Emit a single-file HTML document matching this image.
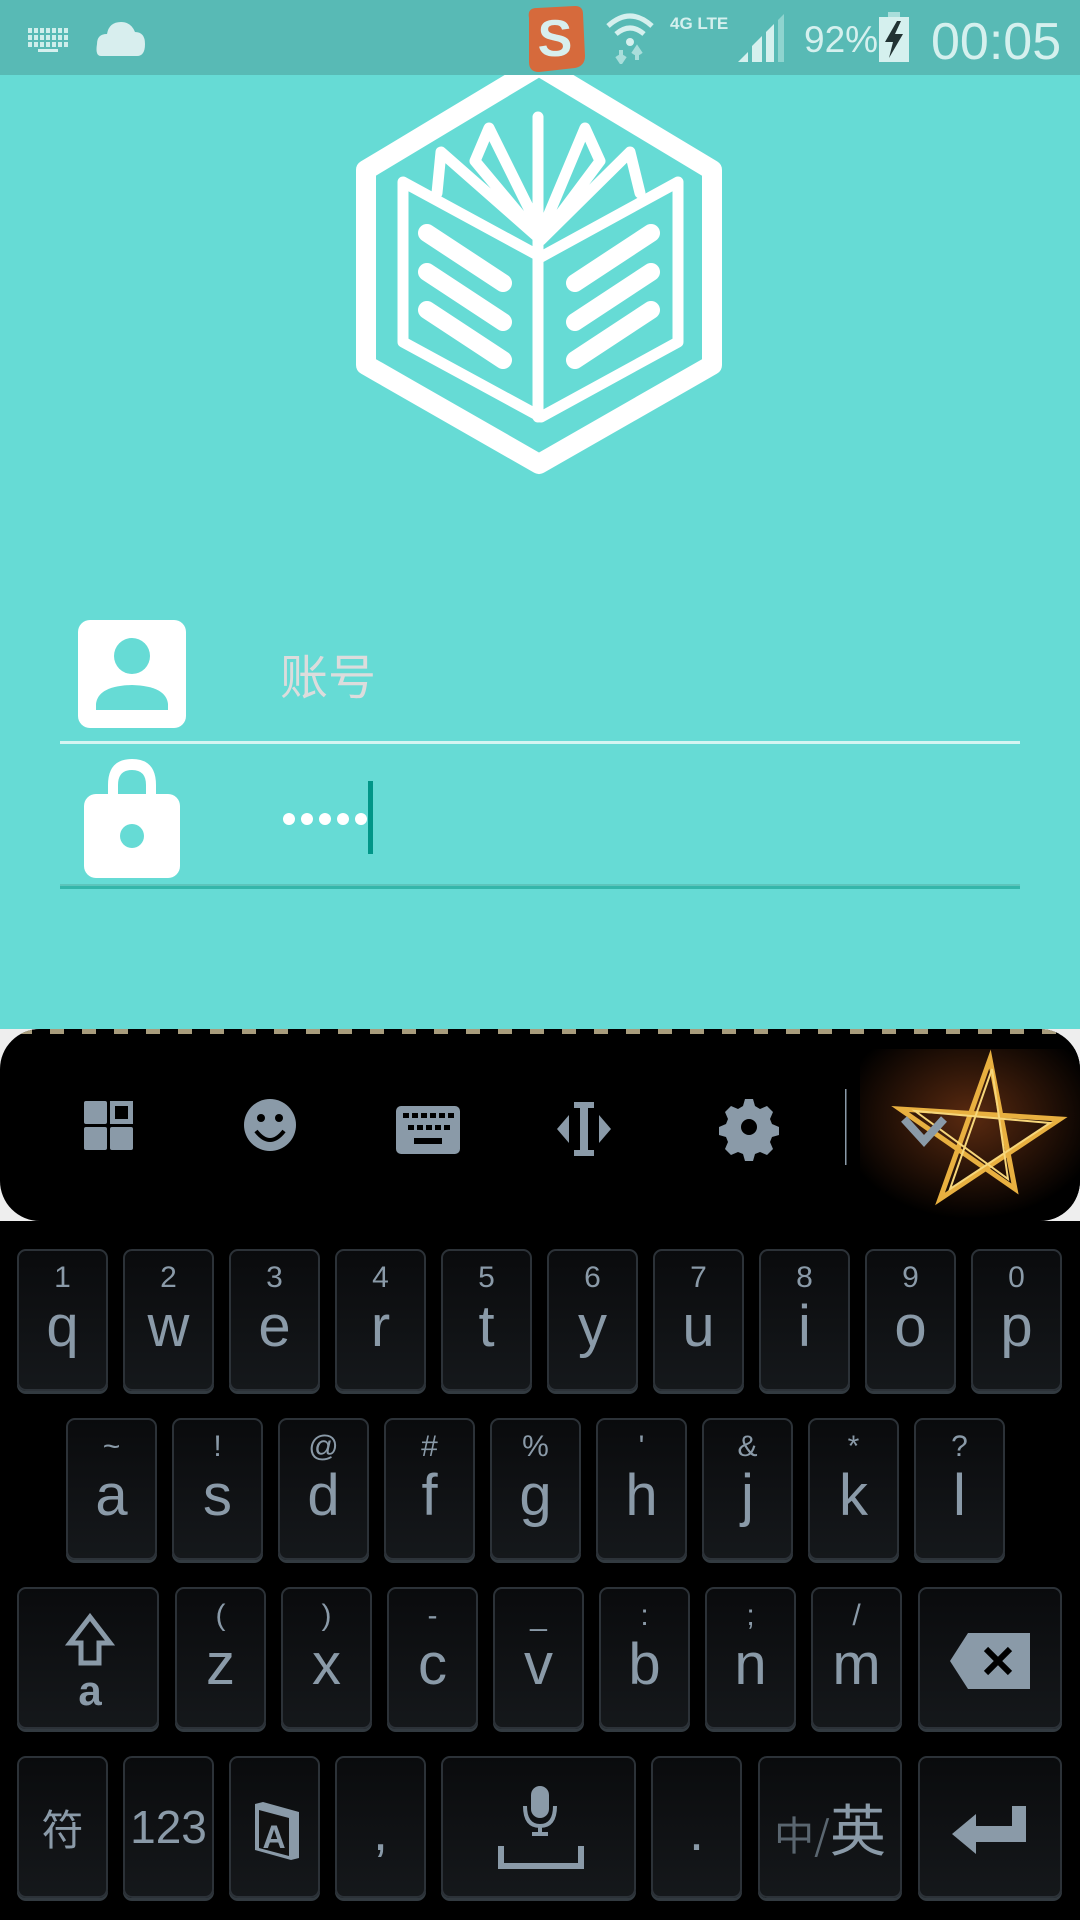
<!DOCTYPE html>
<html><head><meta charset="utf-8"><style>
*{margin:0;padding:0;box-sizing:border-box}
body{width:1080px;height:1920px;overflow:hidden;background:#66dbd5;font-family:"Liberation Sans","Noto Sans CJK SC",sans-serif;position:relative}
.abs{position:absolute}
#sb{left:0;top:0;width:1080px;height:75px;background:#58bab5;z-index:5}
.st{color:#d5f0ee;position:absolute;white-space:nowrap}
#kb{left:0;top:1221px;width:1080px;height:699px;background:#000}
.k{position:absolute;border:2px solid #2c3238;border-radius:9px;background:linear-gradient(#0a0b0d,#15181b);box-shadow:0 3px 0 #323a40;color:#8a9aa8;text-align:center}
.k .n{position:absolute;left:0;right:0;top:12px;font-size:30px;line-height:30px}
.k .l{position:absolute;left:0;right:0;top:46px;font-size:58px;line-height:60px}
.k .c{position:absolute;left:0;right:0;top:0;bottom:0;display:flex;align-items:center;justify-content:center}
</style></head><body>
<svg class="abs" style="left:0;top:0" width="1080" height="500" viewBox="0 0 1080 500">
 <g fill="none" stroke="#fff" stroke-linejoin="round" stroke-linecap="round">
  <path d="M539 66 L712 170 V365 L539 464 L366 365 V170Z" stroke-width="20"/>
  <g stroke-width="11">
   <path d="M403 182 V342 L541 417 L678 342 V182 L541 257 Z"/>
   <path d="M538 117 V417"/>
   <path d="M437 193 L441 152 L541 240 L475 161 L489 128 L541 233 L585 128 L600 161 L541 240 L630 152 L640 193"/>
  </g>
  <g stroke-width="18">
   <path d="M427 233 L503 283 M427 272 L503 322 M427 310 L503 360"/>
   <path d="M651 233 L575 283 M651 272 L575 322 M651 310 L575 360"/>
  </g>
 </g>
</svg>
<div id="sb" class="abs">
 <svg class="abs" style="left:28px;top:28px" width="42" height="24" viewBox="0 0 42 24"><g fill="#d5f0ee"><path d="M0 0h40v5H0z M0 7h40v5H0z M0 14h40v5H0z" opacity=".95"/><rect x="10" y="21" width="20" height="3"/></g><g fill="#58bab5"><rect x="4" y="0" width="2" height="19"/><rect x="10" y="0" width="2" height="19"/><rect x="16" y="0" width="2" height="19"/><rect x="22" y="0" width="2" height="19"/><rect x="28" y="0" width="2" height="19"/><rect x="34" y="0" width="2" height="19"/></g></svg>
 <svg class="abs" style="left:95px;top:18px" width="52" height="40" viewBox="0 0 52 40"><path d="M6 38 Q0 38 2 26 Q2 16 12 16 Q14 4 26 4 Q36 4 40 14 Q50 14 50 26 Q50 38 42 38Z" fill="#d8eeee"/></svg>
 <svg class="abs" style="left:523px;top:6px" width="64" height="66" viewBox="0 0 64 66"><path d="M6 12 Q4 2 14 2 L52 0 Q60 0 60 8 L62 50 Q62 60 52 62 L16 66 Q6 66 6 56Z" fill="#d66a3c"/><text x="32" y="50" text-anchor="middle" font-size="52" font-weight="bold" fill="#d8efee" font-family="Liberation Sans">S</text></svg>
 <svg class="abs" style="left:604px;top:10px" width="52" height="54" viewBox="0 0 52 54"><g fill="none" stroke="#d5f0ee" stroke-width="5"><path d="M4 16 Q26 -4 48 16"/><path d="M12 24 Q26 12 40 24"/></g><circle cx="26" cy="32" r="4" fill="#d5f0ee"/><path d="M17 40v10M13 46l4 6 4-6M33 50V40M29 44l4-6 4 6" stroke="#a9dedb" stroke-width="4" fill="none"/></svg>
 <div class="st" style="left:670px;top:14px;font-size:17px;font-weight:bold">4G LTE</div>
 <svg class="abs" style="left:738px;top:14px" width="50" height="48" viewBox="0 0 50 48"><path d="M0 48 L10 38 V48Z M14 48V32 L24 22V48Z M28 48V18L36 10V48Z" fill="#d5f0ee"/><path d="M40 48V6 L46 0V48Z" fill="#8fd4cf"/></svg>
 <div class="st" style="left:804px;top:19px;font-size:37px">92%</div>
 <svg class="abs" style="left:879px;top:12px" width="30" height="50" viewBox="0 0 30 50"><rect x="9" y="0" width="12" height="6" fill="#a9dedb"/><rect x="0" y="5" width="30" height="45" fill="#d5f0ee"/><path d="M18 9 L6 30 H14 L10 46 L24 22 H16 L22 9Z" fill="#233"/></svg>
 <div class="st" style="left:931px;top:12px;font-size:52px">00:05</div>
</div>
<svg class="abs" style="left:78px;top:620px" width="108" height="108" viewBox="0 0 108 108"><rect width="108" height="108" rx="12" fill="#fff"/><circle cx="54" cy="36" r="18" fill="#66dbd5"/><path d="M18 90 V84 Q20 66 54 65 Q88 66 90 84 V90Z" fill="#66dbd5"/></svg>
<div class="abs" style="left:280px;top:646px;font-size:48px;line-height:54px;color:#dcdcdc;font-family:'Noto Sans CJK SC',sans-serif">账号</div>
<div class="abs" style="left:60px;top:741px;width:960px;height:3px;background:#d4f5f2"></div>
<svg class="abs" style="left:84px;top:759px" width="96" height="120" viewBox="0 0 96 120"><path d="M24 40 V26 Q24 0 48 0 Q72 0 72 26 V40 H62 V26 Q62 11 48 11 Q34 11 34 26 V40Z" fill="#fff"/><rect x="0" y="35" width="96" height="84" rx="12" fill="#fff"/><circle cx="48" cy="77" r="12" fill="#66dbd5"/></svg>
<svg class="abs" style="left:280px;top:810px" width="90" height="20"><g fill="#fff"><circle cx="9" cy="9" r="6"/><circle cx="27" cy="9" r="6"/><circle cx="45" cy="9" r="6"/><circle cx="63" cy="9" r="6"/><circle cx="81" cy="9" r="6"/></g></svg>
<div class="abs" style="left:368px;top:781px;width:5px;height:73px;background:#009688"></div>
<div class="abs" style="left:60px;top:884px;width:960px;height:2px;background:#5cc4bb"></div>
<div class="abs" style="left:60px;top:886px;width:960px;height:3px;background:#34b6aa"></div>

<div class="abs" style="left:0;top:1029px;width:1080px;height:192px;background:#eee"></div>
<div class="abs" style="left:0;top:1029px;width:1080px;height:192px;background:#000;border-radius:40px;overflow:hidden">
 <div class="abs" style="left:0;top:0;width:1080px;height:5px;background:repeating-linear-gradient(90deg,#000 0 18px,#a89c7c 18px 32px)"></div>
 <svg class="abs" style="left:860px;top:20px" width="220" height="170" viewBox="0 0 220 170"><defs><radialGradient id="g" cx="0.5" cy="0.4" r="0.6"><stop offset="0" stop-color="#5a2a10"/><stop offset="1" stop-color="#000"/></radialGradient></defs><rect width="220" height="170" fill="url(#g)"/><path d="M130 10 L155 140 L40 60 L200 70 L80 150Z" fill="none" stroke="#e8b040" stroke-width="5"/><path d="M132 20 L148 130 L55 62 L190 74 L90 140Z" fill="none" stroke="#f6d67a" stroke-width="2"/></svg>
</div>
<svg class="abs" style="left:0;top:1029px" width="1080" height="192" viewBox="0 0 1080 192"><g fill="#8a9aa8">
 <rect x="84" y="72" width="23" height="23" rx="2"/><rect x="84" y="98" width="23" height="23" rx="2"/><rect x="110" y="98" width="23" height="23" rx="2"/><path d="M110 72h23v23h-23z M115 77v13h13v-13z" fill-rule="evenodd"/>
 <circle cx="270" cy="96" r="26"/>
 <rect x="396" y="77" width="64" height="48" rx="5"/>
 <rect x="580" y="73" width="8" height="54"/><rect x="574" y="73" width="20" height="6"/><rect x="574" y="121" width="20" height="6"/><path d="M557 100 l12-14v28z M611 100 l-12-14v28z"/>
 <path d="M745 70 h8 l2 7 5 3 7-3 6 6-3 7 2 5 7 3v8l-7 2-2 5 3 7-6 6-7-3-5 2-2 7h-8l-2-7-5-2-7 3-6-6 3-7-2-5-7-2v-8l7-3 2-5-3-7 6-6 7 3 5-3z"/>
</g>
<g fill="#000"><circle cx="261" cy="89" r="4"/><circle cx="279" cy="89" r="4"/><path d="M256 102 Q270 120 284 102" stroke="#000" stroke-width="4" fill="none"/>
<g><rect x="403" y="84" width="6" height="5"/><rect x="412" y="84" width="6" height="5"/><rect x="421" y="84" width="6" height="5"/><rect x="430" y="84" width="6" height="5"/><rect x="439" y="84" width="6" height="5"/><rect x="448" y="84" width="6" height="5"/><rect x="408" y="96" width="6" height="5"/><rect x="417" y="96" width="6" height="5"/><rect x="426" y="96" width="6" height="5"/><rect x="435" y="96" width="6" height="5"/><rect x="444" y="96" width="6" height="5"/><rect x="414" y="109" width="28" height="6"/></g>
<circle cx="749" cy="98" r="8"/></g>
<rect x="845" y="60" width="1.5" height="76" fill="#8a9aa8"/>
<path d="M904 90 L924 112 L944 90" fill="none" stroke="#8a9aa8" stroke-width="8"/>
</svg>

<div id="kb" class="abs"></div>
<div class="k" style="left:17px;top:1249px;width:91px;height:142px"><span class="n">1</span><span class="l">q</span></div>
<div class="k" style="left:123px;top:1249px;width:91px;height:142px"><span class="n">2</span><span class="l">w</span></div>
<div class="k" style="left:229px;top:1249px;width:91px;height:142px"><span class="n">3</span><span class="l">e</span></div>
<div class="k" style="left:335px;top:1249px;width:91px;height:142px"><span class="n">4</span><span class="l">r</span></div>
<div class="k" style="left:441px;top:1249px;width:91px;height:142px"><span class="n">5</span><span class="l">t</span></div>
<div class="k" style="left:547px;top:1249px;width:91px;height:142px"><span class="n">6</span><span class="l">y</span></div>
<div class="k" style="left:653px;top:1249px;width:91px;height:142px"><span class="n">7</span><span class="l">u</span></div>
<div class="k" style="left:759px;top:1249px;width:91px;height:142px"><span class="n">8</span><span class="l">i</span></div>
<div class="k" style="left:865px;top:1249px;width:91px;height:142px"><span class="n">9</span><span class="l">o</span></div>
<div class="k" style="left:971px;top:1249px;width:91px;height:142px"><span class="n">0</span><span class="l">p</span></div>
<div class="k" style="left:66px;top:1418px;width:91px;height:142px"><span class="n">~</span><span class="l">a</span></div>
<div class="k" style="left:172px;top:1418px;width:91px;height:142px"><span class="n">!</span><span class="l">s</span></div>
<div class="k" style="left:278px;top:1418px;width:91px;height:142px"><span class="n">@</span><span class="l">d</span></div>
<div class="k" style="left:384px;top:1418px;width:91px;height:142px"><span class="n">#</span><span class="l">f</span></div>
<div class="k" style="left:490px;top:1418px;width:91px;height:142px"><span class="n">%</span><span class="l">g</span></div>
<div class="k" style="left:596px;top:1418px;width:91px;height:142px"><span class="n">'</span><span class="l">h</span></div>
<div class="k" style="left:702px;top:1418px;width:91px;height:142px"><span class="n">&amp;</span><span class="l">j</span></div>
<div class="k" style="left:808px;top:1418px;width:91px;height:142px"><span class="n">*</span><span class="l">k</span></div>
<div class="k" style="left:914px;top:1418px;width:91px;height:142px"><span class="n">?</span><span class="l">l</span></div>
<div class="k" style="left:17px;top:1587px;width:142px;height:142px"><svg class="abs" style="left:46px;top:24px" width="50" height="94" viewBox="0 0 50 94"><path d="M25 4 L45 30 H34 V50 H16 V30 H5Z" fill="none" stroke="#8a9aa8" stroke-width="5"/><text x="25" y="92" text-anchor="middle" font-size="42" font-weight="bold" fill="#8a9aa8" font-family="Liberation Sans">a</text></svg></div>
<div class="k" style="left:175px;top:1587px;width:91px;height:142px"><span class="n">(</span><span class="l">z</span></div>
<div class="k" style="left:281px;top:1587px;width:91px;height:142px"><span class="n">)</span><span class="l">x</span></div>
<div class="k" style="left:387px;top:1587px;width:91px;height:142px"><span class="n">-</span><span class="l">c</span></div>
<div class="k" style="left:493px;top:1587px;width:91px;height:142px"><span class="n">_</span><span class="l">v</span></div>
<div class="k" style="left:599px;top:1587px;width:91px;height:142px"><span class="n">:</span><span class="l">b</span></div>
<div class="k" style="left:705px;top:1587px;width:91px;height:142px"><span class="n">;</span><span class="l">n</span></div>
<div class="k" style="left:811px;top:1587px;width:91px;height:142px"><span class="n">/</span><span class="l">m</span></div>
<div class="k" style="left:918px;top:1587px;width:144px;height:142px"><svg class="abs" style="left:30px;top:44px" width="80" height="56" viewBox="0 0 80 56"><path d="M0 28 L18 0 H80 V56 H18Z" fill="#8a9aa8"/><path d="M36 16 L60 40 M60 16 L36 40" stroke="#000" stroke-width="6"/></svg></div>
<div class="k" style="left:17px;top:1756px;width:91px;height:142px"><span class="c" style="font-size:42px;font-family:'Noto Sans CJK SC',sans-serif">符</span></div>
<div class="k" style="left:123px;top:1756px;width:91px;height:142px"><span class="c" style="font-size:46px">123</span></div>
<div class="k" style="left:229px;top:1756px;width:91px;height:142px"><svg class="abs" style="left:22px;top:44px" width="48" height="58" viewBox="0 0 48 58"><path d="M2 2 L10 0 L46 10 V56 L38 58 L2 48Z" fill="#8a9aa8"/><path d="M6 8 V46 L36 54 V16Z" fill="#111"/><text x="21" y="46" text-anchor="middle" font-size="32" font-weight="bold" fill="#8a9aa8" font-family="Liberation Sans">A</text></svg></div>
<div class="k" style="left:335px;top:1756px;width:91px;height:142px"><span class="c" style="font-size:54px;padding-top:10px">,</span></div>
<div class="k" style="left:441px;top:1756px;width:195px;height:142px"><svg class="abs" style="left:55px;top:28px" width="86" height="84" viewBox="0 0 86 84"><rect x="33" y="0" width="18" height="32" rx="9" fill="#8a9aa8"/><path d="M27 20 Q27 40 42 40 Q57 40 57 20 M42 40 V48 M34 48 H50" fill="none" stroke="#8a9aa8" stroke-width="4"/><path d="M3 60 V80 H83 V60" fill="none" stroke="#8a9aa8" stroke-width="6"/></svg></div>
<div class="k" style="left:651px;top:1756px;width:91px;height:142px"><span class="c" style="font-size:54px;padding-top:10px">.</span></div>
<div class="k" style="left:758px;top:1756px;width:144px;height:142px"><span class="c" style="font-family:'Noto Sans CJK SC',sans-serif"><span style="font-size:40px;color:#5a6670;margin-top:12px">中/</span><span style="font-size:56px">英</span></span></div>
<div class="k" style="left:918px;top:1756px;width:144px;height:142px"><svg class="abs" style="left:32px;top:48px" width="76" height="48" viewBox="0 0 76 48"><path d="M0 28 L24 8 V20 H60 V0 H74 V36 H24 V48Z" fill="#8a9aa8"/></svg></div>
</body></html>
